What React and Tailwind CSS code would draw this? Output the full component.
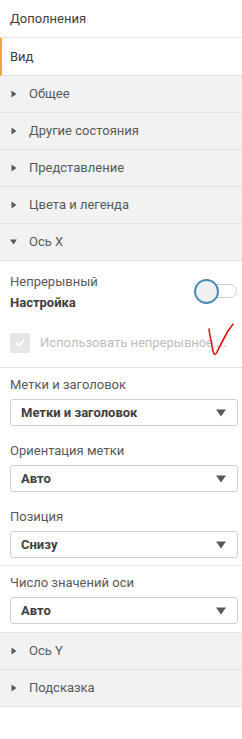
import React from "react";

const Caret = ({ open }) => (
  <svg width="8" height="8" viewBox="0 0 8 8" className="shrink-0">
    {open ? (
      <path d="M0 1.5 L7 1.5 L3.5 6.5 Z" fill="#595959" />
    ) : (
      <path d="M1.5 0.5 L6.5 4 L1.5 7.5 Z" fill="#595959" />
    )}
  </svg>
);

function Section({ title, open }) {
  return (
    <div className="h-[37px] flex items-center gap-[11px] pl-[10px] bg-[#f2f2f2] border-b border-[#e3e3e3] text-[13px] text-[#595959]">
      <Caret open={open} />
      <span>{title}</span>
    </div>
  );
}

function Select({ value }) {
  return (
    <div className="h-[27px] ml-[10px] mr-[4px] flex items-center justify-between pl-[10px] pr-[11px] bg-white border border-[#cfcfcf] rounded-[3px]">
      <span className="text-[13px] font-bold text-[#404040]">{value}</span>
      <svg width="10" height="8" viewBox="0 0 10 8">
        <path d="M0 0.5 L10 0.5 L5 7.5 Z" fill="#595959" />
      </svg>
    </div>
  );
}

function Field({ label, value }) {
  return (
    <div>
      <div className="px-[10px] text-[13px] text-[#595959] h-[18px] leading-[18px] mb-[5px]">{label}</div>
      <Select value={value} />
    </div>
  );
}

export default function App() {
  return (
    <div
      className="w-[242px] h-[739px] bg-white overflow-hidden"
      style={{ fontFamily: 'Roboto, "Noto Sans", sans-serif' }}
    >
      <div className="h-[38px] flex items-center pl-[10px] border-b border-[#e3e3e3] text-[13px] text-[#404040]">
        Дополнения
      </div>
      <div className="h-[38px] flex items-center pl-[8px] border-l-2 border-l-[#f2a53a] border-b border-b-[#e3e3e3] text-[13px] text-[#404040]">
        Вид
      </div>
      <Section title="Общее" />
      <Section title="Другие состояния" />
      <Section title="Представление" />
      <Section title="Цвета и легенда" />
      <Section title="Ось X" open />

      <div className="border-b border-[#e3e3e3] pb-[14px]">
        <div className="flex justify-between pt-[12px] pr-[4px]">
          <div className="pl-[10px]">
            <div className="text-[13px] text-[#595959] h-[18px] leading-[18px]">Непрерывный</div>
            <div className="text-[13px] font-bold text-[#404040] h-[20px] leading-[20px] mt-[2px]">Настройка</div>
          </div>
          <div className="relative w-[44px] h-[25px] mt-[6px]">
            <div className="absolute left-[5px] top-[5px] w-[38px] h-[14px] rounded-full border border-[#cfcfcf] bg-white" />
            <div className="absolute left-0 top-0 w-[25px] h-[25px] rounded-full border-2 border-[#4a8cb8] bg-[#f0f0f0]" />
          </div>
        </div>
        <div className="flex items-center mt-[20px] pl-[10px] relative">
          <div className="w-[20px] h-[20px] rounded-[2px] bg-[#e6e6e6] flex items-center justify-center">
            <svg width="10" height="8" viewBox="0 0 10 8">
              <path d="M1 4 L4 6.5 L9 1" stroke="#fff" strokeWidth="2" fill="none" />
            </svg>
          </div>
          <span className="ml-[10px] text-[13px] text-[#bdbdbd]">Использовать непрерывное ...</span>
          <svg className="absolute left-[204px] top-[-14px]" width="34" height="40" viewBox="0 0 34 40">
            <path
              d="M5 10 C6 18 8 26 9 32 C10 36 11 37 13 33 C17 25 21 17 24 12 C26 9 28 7 29 5"
              stroke="#e01010"
              strokeWidth="1.6"
              fill="none"
              strokeLinecap="round"
            />
          </svg>
        </div>
      </div>

      <div className="border-b border-[#e3e3e3] pt-[8px] pb-[7px] flex flex-col gap-[16px]">
        <Field label="Метки и заголовок" value="Метки и заголовок" />
        <Field label="Ориентация метки" value="Авто" />
        <Field label="Позиция" value="Снизу" />
      </div>
      <div className="pt-[8px] pb-[8px] border-b border-[#e3e3e3]">
        <Field label="Число значений оси" value="Авто" />
      </div>
      <Section title="Ось Y" />
      <Section title="Подсказка" />
    </div>
  );
}
